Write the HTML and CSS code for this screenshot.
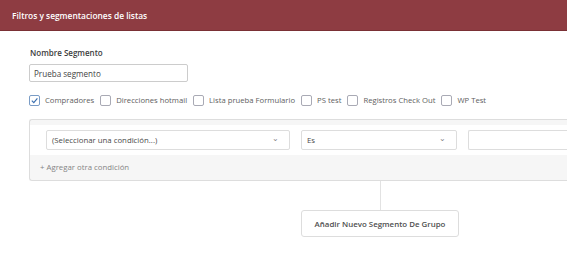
FILE: index.html
```html
<!DOCTYPE html>
<html lang="es">
<head>
<meta charset="utf-8">
<link rel="stylesheet" href="styles.css">
</head>
<body>
<header class="topbar">Filtros y segmentaciones de listas</header>
<main class="content">
  <label class="field-label">Nombre Segmento</label>
  <input class="name-input" type="text" value="Prueba segmento">
  <div class="lists">
    <label class="chk"><span class="box checked"><svg viewBox="0 0 10 10" width="9" height="9"><path d="M2 5.2 L4.2 7.3 L8.2 2.6" fill="none" stroke="#3a6fb0" stroke-width="1.3"/></svg></span>Compradores</label>
    <label class="chk"><span class="box"></span>Direcciones hotmail</label>
    <label class="chk"><span class="box"></span>Lista prueba Formulario</label>
    <label class="chk"><span class="box"></span>PS test</label>
    <label class="chk"><span class="box"></span>Registros Check Out</label>
    <label class="chk"><span class="box"></span>WP Test</label>
  </div>
  <section class="group">
    <div class="cond-row">
      <div class="select sel-cond"><span>(Seleccionar una condición...)</span><span class="caret">⌄</span></div>
      <div class="select sel-op"><span>Es</span><span class="caret">⌄</span></div>
      <div class="select sel-val"></div>
    </div>
    <div class="add-cond">+ Agregar otra condición</div>
  </section>
  <div class="connector"></div>
  <div class="btn-row"><button class="btn">Añadir Nuevo Segmento De Grupo</button></div>
</main>
</body>
</html>
```
FILE: styles.css
```css
* { box-sizing: border-box; }
html, body { margin: 0; padding: 0; background: #fff; overflow: hidden; }
body { font-family: "Open Sans", "Noto Sans", sans-serif; color: #555; font-size: 8px; width: 567px; height: 261px; }
.topbar {
  height: 31px; background: #8e3c42; color: #fff; font-weight: 600;
  font-size: 8.4px; padding: 0 12px; display: flex; align-items: center;
  border-bottom: 1px solid #7a3035;
}
.content { padding: 16px 0 0 29px; }
.field-label { display: block; font-weight: 600; color: #3d3d3d; font-size: 8px; margin: 0 0 5px 1px; line-height: 12px; }
.name-input {
  display: block; width: 159px; height: 18px; border: 1px solid #ccc; border-radius: 2px;
  font-family: inherit; font-size: 8.1px; color: #444; padding: 0 4px; outline: none;
}
.lists { display: flex; align-items: center; margin-top: 12px; height: 12px; }
.chk { display: flex; align-items: center; color: #5e5e5e; font-size: 7.7px; margin-right: 6px; }
.box {
  width: 11px; height: 11px; border: 1px solid #a9aab5; border-radius: 2px; margin-right: 5px;
  display: inline-flex; align-items: center; justify-content: center; background: #fff;
}
.box.checked { border-color: #7a9cc6; }
.group {
  margin-top: 13px; width: 560px; border: 1px solid #ddd; border-right: none; border-radius: 3px 0 0 3px;
  background: #f6f6f6; height: 62px; padding-top: 5px;
}
.cond-row { background: #fff; height: 30px; display: flex; align-items: center; padding-left: 16px; gap: 11px; }
.select {
  height: 20px; border: 1px solid #ddd; border-radius: 2px; background: #fff;
  display: flex; align-items: center; justify-content: space-between; padding: 0 10px 0 5px;
  font-size: 7.8px; color: #4a4a4a;
}
.caret { font-size: 8px; color: #888; line-height: 1; margin-top: -4px; }
.sel-cond { width: 244px; }
.sel-op { width: 156px; }
.sel-val { flex: 1; border-right: none; border-radius: 2px 0 0 2px; }
.add-cond { color: #858585; font-size: 7.8px; padding: 7px 0 0 10px; }
.connector { margin-left: 351px; width: 1px; height: 29px; background: #e2e2e2; }
.btn-row { padding-left: 272px; }
.btn {
  width: 158px; height: 27px; background: #fff; border: 1px solid #ddd; border-radius: 3px;
  font-family: inherit; font-size: 7.9px; font-weight: 600; color: #4f4f4f; padding: 0;
}
```
